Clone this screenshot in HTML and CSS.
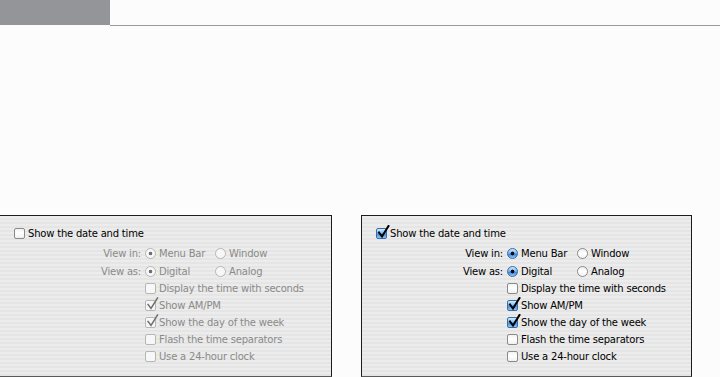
FILE: index.html
```html
<!DOCTYPE html>
<html lang="en">
<head>
<meta charset="utf-8">
<title>Date &amp; Time</title>
<link rel="stylesheet" href="styles.css">
</head>
<body>
<header class="top">
  <div class="tab"></div>
  <div class="rule"></div>
</header>
<main class="panels">
  <section class="panel disabled">
    <div class="row head">
      <span class="cb enabled"></span><span class="lbl on">Show the date and time</span>
    </div>
    <div class="field">
      <span class="key">View in:</span>
      <span class="opt"><span class="rb sel"></span>Menu Bar</span>
      <span class="opt"><span class="rb"></span>Window</span>
    </div>
    <div class="field">
      <span class="key">View as:</span>
      <span class="opt"><span class="rb sel"></span>Digital</span>
      <span class="opt"><span class="rb"></span>Analog</span>
    </div>
    <div class="row sub"><span class="cb"></span><span class="lbl">Display the time with seconds</span></div>
    <div class="row sub"><span class="cb chk"><svg class="mark" viewBox="0 0 13 14" width="13" height="14"><path d="M2 7.5 L5 11.5 L11.5 1"/></svg></span><span class="lbl">Show AM/PM</span></div>
    <div class="row sub"><span class="cb chk"><svg class="mark" viewBox="0 0 13 14" width="13" height="14"><path d="M2 7.5 L5 11.5 L11.5 1"/></svg></span><span class="lbl">Show the day of the week</span></div>
    <div class="row sub"><span class="cb"></span><span class="lbl">Flash the time separators</span></div>
    <div class="row sub"><span class="cb"></span><span class="lbl">Use a 24-hour clock</span></div>
  </section>
  <section class="panel active">
    <div class="row head">
      <span class="cb chk"><svg class="mark" viewBox="0 0 13 14" width="13" height="14"><path d="M2 7.5 L5 11.5 L11.5 1"/></svg></span><span class="lbl">Show the date and time</span>
    </div>
    <div class="field">
      <span class="key">View in:</span>
      <span class="opt"><span class="rb sel"></span>Menu Bar</span>
      <span class="opt"><span class="rb"></span>Window</span>
    </div>
    <div class="field">
      <span class="key">View as:</span>
      <span class="opt"><span class="rb sel"></span>Digital</span>
      <span class="opt"><span class="rb"></span>Analog</span>
    </div>
    <div class="row sub"><span class="cb"></span><span class="lbl">Display the time with seconds</span></div>
    <div class="row sub"><span class="cb chk"><svg class="mark" viewBox="0 0 13 14" width="13" height="14"><path d="M2 7.5 L5 11.5 L11.5 1"/></svg></span><span class="lbl">Show AM/PM</span></div>
    <div class="row sub"><span class="cb chk"><svg class="mark" viewBox="0 0 13 14" width="13" height="14"><path d="M2 7.5 L5 11.5 L11.5 1"/></svg></span><span class="lbl">Show the day of the week</span></div>
    <div class="row sub"><span class="cb"></span><span class="lbl">Flash the time separators</span></div>
    <div class="row sub"><span class="cb"></span><span class="lbl">Use a 24-hour clock</span></div>
  </section>
</main>
</body>
</html>
```
FILE: styles.css
```css
* { box-sizing: border-box; }
html, body { margin: 0; padding: 0; background: #fcfcfc; }
body {
  width: 720px;
  height: 377px;
  overflow: hidden;
  font-family: "DejaVu Sans", "Liberation Sans", sans-serif;
  font-size: 10px;
  letter-spacing: -0.2px;
  color: #000;
}

.top { display: flex; height: 26px; }
.tab { width: 110px; height: 25px; background: #939598; }
.rule { flex: 1; border-bottom: 1px solid #9a9a9a; }

.panels {
  display: flex;
  gap: 29px;
  margin-top: 189px;
  margin-left: -1px;
}
.panel {
  width: 331px;
  height: 162px;
  border: 1px solid #1c1c1c;
  border-bottom-color: #5a5a5a;
  border-bottom-width: 1px;
  padding-top: 9px;
  background: repeating-linear-gradient(180deg, #ececec 0 2px, #e5e5e5 2px 4px);
}
.panels .panel:first-child { width: 333px; }

.row { display: flex; align-items: center; height: 17px; }
.row.head { padding-left: 14px; margin-bottom: 2px; }
.row.sub { padding-left: 145px; }
.lbl { margin-left: 3px; white-space: nowrap; }

.field {
  display: grid;
  grid-template-columns: 145px 70px auto;
  align-items: center;
  height: 18px;
}
.key { text-align: right; padding-right: 4px; }
.opt { display: flex; align-items: center; gap: 3px; white-space: nowrap; }

/* checkbox */
.cb {
  position: relative;
  flex: none;
  width: 11px;
  height: 11px;
  border-radius: 2px;
  border: 1px solid #8a8a8a;
  background: linear-gradient(180deg, #f2f2f2 0%, #ffffff 45%, #f0f0f0 100%);
}
.mark {
  position: absolute;
  left: 0;
  top: -4px;
  fill: none;
  stroke: #000;
  stroke-width: 2;
  stroke-linecap: square;
  stroke-linejoin: miter;
}
.active .cb.chk {
  border-color: #3b6ea8;
  background: linear-gradient(180deg, #d5ecff 0%, #7fbdf3 45%, #3e8fe0 55%, #8cc8f7 100%);
}

/* radio */
.rb {
  flex: none;
  width: 11px;
  height: 11px;
  border-radius: 50%;
  border: 1px solid #8a8a8a;
  background: linear-gradient(180deg, #efefef 0%, #ffffff 50%, #f2f2f2 100%);
}
.active .rb.sel {
  border-color: #3a6aa3;
  background:
    radial-gradient(circle at 50% 50%, #0a0a0a 0 1.6px, transparent 2.2px),
    linear-gradient(180deg, #cfe8ff 0%, #79b9f2 45%, #3a8ae0 60%, #92cbf7 100%);
}

/* disabled panel */
.disabled { color: #8a8a8a; }
.disabled .lbl.on { color: #000; }
.disabled .cb,
.disabled .rb { border-color: #b6b6b6; background: #f7f7f7; }
.disabled .cb.enabled { border-color: #8a8a8a; background: linear-gradient(180deg, #f2f2f2 0%, #ffffff 45%, #f0f0f0 100%); }
.disabled .mark { stroke: #6f6f6f; stroke-width: 1.5; }
.disabled .rb.sel {
  background:
    radial-gradient(circle at 50% 50%, #707070 0 1.5px, transparent 2.1px),
    #f7f7f7;
}
```
